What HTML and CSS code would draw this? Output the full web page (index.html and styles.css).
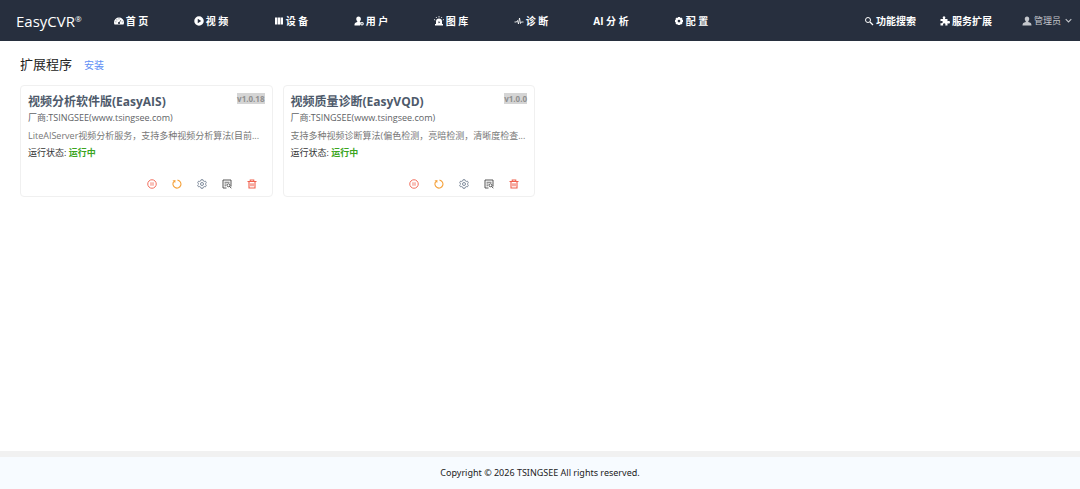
FILE: index.html
```html
<!DOCTYPE html>
<html lang="zh-CN">
<head>
    <meta charset="UTF-8">
    <meta name="viewport" content="width=device-width, initial-scale=1.0">
    <title>EasyCVR</title>
    <link rel="stylesheet" href="styles.css">
</head>
<body>
    <!-- icons shared by both cards -->
    <svg class="sprite" aria-hidden="true">
        <symbol id="icon-pause" viewBox="0 0 20 20">
            <circle cx="10" cy="10" r="8.5" fill="none" stroke="currentColor" stroke-width="1.8"/>
            <path d="M8 6.500v7M12 6.500v7" stroke="currentColor" stroke-width="1.6"/>
        </symbol>
        <symbol id="icon-restart" viewBox="0 0 20 20">
            <path d="M11 2.200A8 8 0 1 1 3.500 5.300" fill="none" stroke="currentColor" stroke-width="2.200"/>
            <path fill="currentColor" d="M1 3l6-1-.5 6z"/>
        </symbol>
        <symbol id="icon-setting" viewBox="0 0 20 20">
            <path d="M8 1.500h4l.7 2.400 1.700 1 2.500-.6 1.900 3.400-1.800 1.800v1l1.800 1.800-1.900 3.400-2.500-.6-1.700 1-.7 2.400H8l-.7-2.400-1.700-1-2.500.6-1.900-3.400L3 10.500v-1L1.200 7.700l1.900-3.400 2.500.6 1.700-1z" fill="none" stroke="currentColor" stroke-width="1.700" stroke-linejoin="round"/>
            <circle cx="10" cy="10" r="3" fill="none" stroke="currentColor" stroke-width="1.700"/>
        </symbol>
        <symbol id="icon-log" viewBox="0 0 20 20">
            <path d="M9 18H2V2h16v9" fill="none" stroke="currentColor" stroke-width="1.800"/>
            <path d="M5 6.500h10M5 10h4M5 13.500h3" stroke="currentColor" stroke-width="1.500"/>
            <circle cx="13" cy="12.500" r="3" fill="none" stroke="currentColor" stroke-width="1.700"/>
            <path d="M15 14.500l3.500 4M18 11v4" stroke="currentColor" stroke-width="1.800"/>
        </symbol>
        <symbol id="icon-delete" viewBox="0 0 20 20">
            <path d="M1 5h18M6.500 5V2h7v3M4 5v13h12V5M8 8.500v6M12 8.500v6" fill="none" stroke="currentColor" stroke-width="2.200"/>
        </symbol>
    </svg>

    <header class="header">
        <a class="logo" href="#">EasyCVR<sup>®</sup></a>
        <nav class="nav">
            <a href="#">
                <svg class="icon" viewBox="0 0 20 20"><path fill="currentColor" fill-rule="evenodd" d="M10 3a10 10 0 0 0-10 10c0 1.500.4 3 1 4h18c.6-1 1-2.500 1-4A10 10 0 0 0 10 3zM9.200 5h1.600v1.600H9.200zM5 7h1.600v1.600H5zM3 11h1.600v1.600H3zM15.600 11h1.600v1.600h-1.600zM13.500 8l1 .6-3 4a2 2 0 1 1-1-.6z"/></svg>
                首 页
            </a>
            <a href="#">
                <svg class="icon" viewBox="0 0 20 20"><path fill="currentColor" fill-rule="evenodd" d="M10 .5a9.500 9.500 0 1 0 0 19 9.500 9.500 0 0 0 0-19zM7.500 5.500l7 4.500-7 4.500z"/></svg>
                视 频
            </a>
            <a href="#">
                <svg class="icon" viewBox="0 0 20 20"><path fill="currentColor" d="M2 3h5v14H2zM8 3h5v14H8zM14 3h4v14h-4z"/></svg>
                设 备
            </a>
            <a href="#">
                <svg class="icon" viewBox="0 0 20 20"><path fill="currentColor" d="M9 1c3 0 4.800 2 4.800 5 0 2-.8 3.600-2 4.600v1.200l2 1L12 19H1c-.5-4 1-6 5.500-7.200v-1.200c-1.300-1-2-2.600-2-4.600C4.500 3 6 1 9 1z"/><circle cx="16" cy="15.500" r="2.500" fill="none" stroke="currentColor" stroke-width="2.200"/></svg>
                用 户
            </a>
            <a href="#">
                <svg class="icon" viewBox="0 0 20 20"><path fill="currentColor" fill-rule="evenodd" d="M4 16v-5a6 6 0 0 1 12 0v5h2v3H2v-3zM10 10l-2 3h1.500v2l3-3H11z"/><path d="M10 0v3M4 2l1.500 2M16 2l-1.500 2M0 7l2.500 1M20 7l-2.500 1" stroke="currentColor" stroke-width="1.600"/></svg>
                图 库
            </a>
            <a href="#">
                <svg class="icon" viewBox="0 0 20 20"><path d="M1 12h4l2-3 2 7 2-12 2 11 1.500-3H19" fill="none" stroke="currentColor" stroke-width="1.700"/></svg>
                诊 断
            </a>
            <a href="#">AI 分 析</a>
            <a href="#">
                <svg class="icon" viewBox="0 0 20 20"><circle cx="10" cy="10" r="5" fill="none" stroke="currentColor" stroke-width="4.500"/><path d="M10 2v3M10 15v3M2 10h3M15 10h3M4.300 4.300l2 2M13.700 13.700l2 2M15.700 4.300l-2 2M6.300 13.700l-2 2" stroke="currentColor" stroke-width="4"/></svg>
                配 置
            </a>
        </nav>
        <div class="tools">
            <a class="search" href="#">
                <svg class="icon" viewBox="0 0 20 20"><circle cx="8" cy="8" r="5" fill="none" stroke="currentColor" stroke-width="2"/><path d="M12 12l6 6" stroke="currentColor" stroke-width="2.500"/></svg>
                功能搜索
            </a>
            <a class="extend" href="#">
                <svg class="icon" viewBox="0 0 20 20"><path fill="currentColor" d="M1 6h5.500C4 2.500 6 .5 8 .5s4 2 1.800 5.500H15v4.500c3-1.500 5-.2 5 2s-2 3.500-5 2V19h-4.500c1-3 0-4.500-2-4.500s-3 1.500-2 4.500H1v-5c3 1 4.500 0 4.500-1.800S4 9.500 1 10.500z"/></svg>
                服务扩展
            </a>
            <button class="user" type="button">
                <svg class="icon" viewBox="0 0 20 20"><path fill="currentColor" d="M10 1c3 0 4.500 2 4.500 5 0 2-.8 3.500-2 4.500V12c4.500 1 6.500 2.500 6.500 7H1c0-4.500 2-6 6.500-7v-1.500c-1.200-1-2-2.500-2-4.500 0-3 1.500-5 4.500-5z"/></svg>
                管理员
                <svg class="arrow" viewBox="0 0 10 10"><path d="M1 3l4 4 4-4" fill="none" stroke="currentColor" stroke-width="1.500"/></svg>
            </button>
        </div>
    </header>

    <main class="content">
        <div class="page-title">
            <h1>扩展程序</h1>
            <a href="#">安装</a>
        </div>

        <div class="cards">
            <section class="card">
                <div class="card-head">
                    <h2>视频分析软件版(EasyAIS)</h2>
                    <span class="version">v1.0.18</span>
                </div>
                <p class="vendor">厂商:TSINGSEE(www.tsingsee.com)</p>
                <p class="desc">LiteAIServer视频分析服务，支持多种视频分析算法(目前...</p>
                <p class="status">运行状态: <span>运行中</span></p>
                <div class="actions">
                    <button class="red" type="button" aria-label="停止"><svg><use href="#icon-pause"/></svg></button>
                    <button class="orange" type="button" aria-label="重启"><svg><use href="#icon-restart"/></svg></button>
                    <button class="slate" type="button" aria-label="设置"><svg><use href="#icon-setting"/></svg></button>
                    <button class="dark" type="button" aria-label="日志"><svg><use href="#icon-log"/></svg></button>
                    <button class="red" type="button" aria-label="删除"><svg><use href="#icon-delete"/></svg></button>
                </div>
            </section>

            <section class="card">
                <div class="card-head">
                    <h2>视频质量诊断(EasyVQD)</h2>
                    <span class="version">v1.0.0</span>
                </div>
                <p class="vendor">厂商:TSINGSEE(www.tsingsee.com)</p>
                <p class="desc">支持多种视频诊断算法(偏色检测，亮暗检测，清晰度检查...</p>
                <p class="status">运行状态: <span>运行中</span></p>
                <div class="actions">
                    <button class="red" type="button" aria-label="停止"><svg><use href="#icon-pause"/></svg></button>
                    <button class="orange" type="button" aria-label="重启"><svg><use href="#icon-restart"/></svg></button>
                    <button class="slate" type="button" aria-label="设置"><svg><use href="#icon-setting"/></svg></button>
                    <button class="dark" type="button" aria-label="日志"><svg><use href="#icon-log"/></svg></button>
                    <button class="red" type="button" aria-label="删除"><svg><use href="#icon-delete"/></svg></button>
                </div>
            </section>
        </div>
    </main>

    <footer class="footer">Copyright © 2026 TSINGSEE All rights reserved.</footer>
</body>
</html>
```
FILE: styles.css
```css
*{
    box-sizing: border-box;
}

body{
    margin: 0;
    min-height: 100vh;
    display: flex;
    flex-direction: column;
    font-family: "Open Sans", "Noto Sans CJK SC", sans-serif;
    font-size: 9px;
    color: #222;
    background-color: #fff;
}

h1, h2, p{
    margin: 0;
}

a{
    color: inherit;
    text-decoration: none;
}

button{
    padding: 0;
    border: 0;
    background: none;
    font: inherit;
    cursor: pointer;
}

.sprite{
    display: none;
}

/* header */
.header{
    display: flex;
    align-items: center;
    height: 41px;
    padding: 0 8px 0 16px;
    background-color: #272f3e;
    color: #fff;
    white-space: nowrap;
}

.logo{
    width: 75px;
    font-size: 15px;
    line-height: 20px;
}

.logo sup{
    font-size: 8px;
    line-height: 1;
    vertical-align: 5px;
}

.icon{
    width: 10px;
    height: 10px;
    flex-shrink: 0;
}

.nav{
    display: flex;
    font-size: 10px;
    font-weight: 700;
}

.nav a{
    display: flex;
    align-items: center;
    justify-content: center;
    gap: 2px;
    width: 80px;
    line-height: 16px;
}

.tools{
    display: flex;
    align-items: center;
    margin-left: auto;
    font-size: 10px;
    font-weight: 700;
    line-height: 16px;
}

.tools a, .user{
    display: flex;
    align-items: center;
    gap: 2px;
}

.tools .search{
    margin-right: 24px;
}

.user{
    margin-left: 30px;
    color: #c4c7cc;
    font-size: 9px;
    font-weight: 400;
}

.arrow{
    width: 7px;
    height: 7px;
    margin-left: 2px;
}

/* content */
.content{
    flex: 1;
    padding: 13px 20px;
}

.page-title{
    display: flex;
    align-items: baseline;
    gap: 12px;
    line-height: 20px;
    margin-bottom: 10px;
}

.page-title h1{
    font-size: 13px;
    font-weight: 400;
}

.page-title a{
    font-size: 10px;
    color: #5f8ff5;
}

.cards{
    display: grid;
    grid-template-columns: repeat(4, 1fr);
    gap: 10px;
}

.card{
    min-width: 0;
    padding: 7px;
    border: 1px solid #f0f0f0;
    border-radius: 4px;
    color: #606266;
}

.card-head{
    display: flex;
    justify-content: space-between;
    align-items: flex-start;
}

.card-head h2{
    font-size: 12px;
    line-height: 18px;
    color: #4e5a6b;
}

.version{
    background-color: #d5d5d5;
    color: #909090;
    font-size: 8px;
    font-weight: 700;
    line-height: 11px;
}

.vendor{
    line-height: 14px;
}

.desc{
    margin-top: 2px;
    line-height: 17px;
    color: #777;
    white-space: nowrap;
    overflow: hidden;
    text-overflow: ellipsis;
}

.status{
    line-height: 18px;
    color: #333;
}

.status span{
    color: #3ba51e;
    font-weight: 700;
}

.actions{
    display: flex;
    justify-content: flex-end;
    gap: 15px;
    margin-top: 17px;
    padding: 0 8px 0 0;
}

.actions button{
    width: 10px;
    height: 10px;
}

.actions svg{
    display: block;
    width: 10px;
    height: 10px;
}

.red{
    color: #f0604d;
}

.orange{
    color: #f5a23c;
}

.slate{
    color: #6b7a8c;
}

.dark{
    color: #444;
}

.footer{
    border-top: 6px solid #f1f1f1;
    background-color: #f7fbff;
    font-family: "Noto Sans", sans-serif;
    line-height: 32px;
    text-align: center;
}
```
